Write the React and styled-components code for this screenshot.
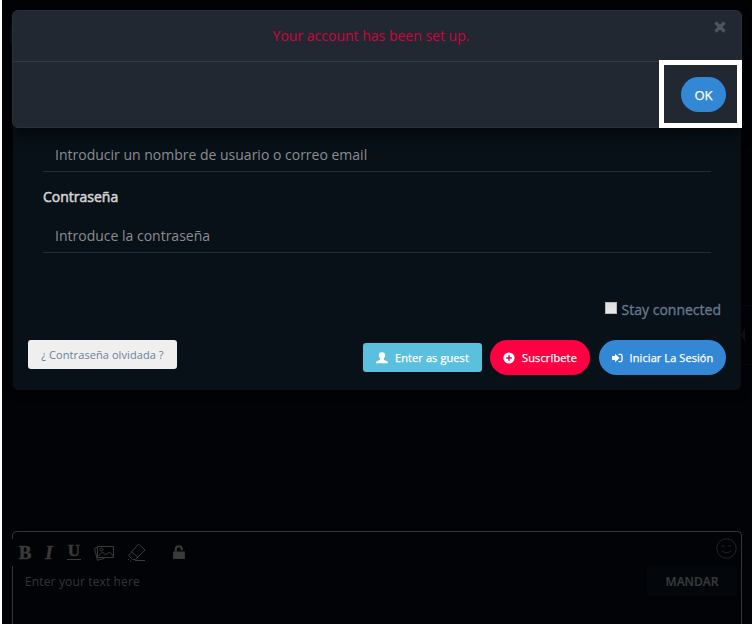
import React from 'react';
import styled, { createGlobalStyle } from 'styled-components';

const GlobalStyle = createGlobalStyle`
  *, *::before, *::after { box-sizing: border-box; }
  body {
    margin: 0;
    background: #fff;
    font-family: "Open Sans", "Noto Sans", sans-serif;
    font-size: 14px;
    overflow: hidden;
  }
  button, input { font-family: inherit; }
`;

const Screen = styled.div`
  position: relative;
  width: 750px;
  height: 624px;
  margin-left: 2px;
  padding: 0 10px;
  background: #020307;
  display: flex;
  flex-direction: column;
  justify-content: flex-end;
  overflow: hidden;
`;

/* Chat page behind the dialogs */
const Editor = styled.section`
  height: 93px;
  border: 1px solid #353535;
  border-bottom: 0;
  border-radius: 5px 5px 0 0;
`;

const Toolbar = styled.div`
  display: flex;
  align-items: center;
  height: 27px;
  margin: 7px 0 0 -1px;
  padding: 0 4px 0 6px;
  background: #020307;
  color: #3a3a3a;
`;

const Format = styled.span`
  width: 14px;
  display: flex;
  justify-content: center;
  font: bold 19px/27px "Liberation Serif", serif;
  font-style: ${(p) => (p.$italic ? 'italic' : 'normal')};
  -webkit-text-stroke: 0.5px currentColor;
  margin-right: 10px;
`;

const Underlined = styled.span`
  width: 14px;
  height: 16px;
  margin: -1px 13px 0 1px;
  border-bottom: 1px solid #3a3a3a;
  font: bold 17px/14px "Liberation Serif", serif;
  -webkit-text-stroke: 0.4px currentColor;
  display: flex;
  justify-content: center;
`;

const ToolIcon = styled.svg`
  width: ${(p) => p.$w}px;
  height: ${(p) => p.$h}px;
  margin-right: ${(p) => p.$gap || 0}px;
  fill: none;
  stroke: #3a3a3a;
  stroke-width: 1;
  flex: none;
`;

const Smiley = styled(ToolIcon)`
  margin: -9px 0 0 auto;
  stroke: #242424;
`;

const Compose = styled.div`
  display: flex;
  justify-content: space-between;
  padding: 0 4px 0 12px;
`;

const ComposeText = styled.span`
  color: #343434;
  font-size: 12px;
  line-height: 32px;
  letter-spacing: 0.14px;
`;

const Send = styled.button`
  width: 90px;
  height: 30px;
  padding: 0;
  border: 0;
  border-radius: 2px;
  background: #03070b;
  color: #3a3a3a;
  font-size: 12px;
  font-weight: 600;
  -webkit-text-stroke: 0.2px currentColor;
`;

const PageTab = styled.span`
  position: absolute;
  left: 8px;
  top: 24px;
  width: 12px;
  height: 23px;
  border-radius: 4px;
  background: #02161b;
`;

const PageEdge = styled.span`
  position: absolute;
  left: 736px;
  top: 305px;
  width: 14px;
  height: 60px;
  padding-right: 7px;
  border: solid #07080b;
  border-width: 1px 0;
  display: flex;
  align-items: center;
  justify-content: flex-end;
`;

/* Dialogs */
const Login = styled.section`
  position: absolute;
  left: 11px;
  top: 14px;
  width: 728px;
  height: 376px;
  padding: 126px 15px 0;
  border-radius: 5px;
  background: #081018;
  box-shadow: 0 3px 8px #0009;
`;

const Fields = styled.div`
  display: flex;
  flex-direction: column;
  padding: 0 15px;
`;

const Field = styled.div`
  height: 32px;
  padding-left: 12px;
  border-bottom: 1px solid #1d2f3d;
  color: #8b8d90;
  line-height: 29px;
`;

const Label = styled.label`
  height: 49px;
  color: #d3d3d3;
  font-weight: 400;
  -webkit-text-stroke: 0.55px currentColor;
  line-height: 50px;
`;

const Remember = styled.label`
  display: flex;
  justify-content: flex-end;
  align-items: center;
  height: 20px;
  margin-top: 47px;
  padding-right: 5px;
  gap: 5px;
  color: #66788e;
  -webkit-text-stroke: 0.35px currentColor;
  line-height: 20px;
`;

const Check = styled.span`
  width: 12px;
  height: 12px;
  margin-top: -4px;
  border: 1px solid #b7b7b7;
  background: linear-gradient(#dedede, #e8e8e8);
`;

const Actions = styled.div`
  display: flex;
  align-items: center;
  height: 35px;
  margin-top: 20px;
`;

const Button = styled.button`
  display: flex;
  align-items: center;
  justify-content: center;
  flex: none;
  width: ${(p) => p.$w}px;
  height: ${(p) => (p.$pill ? 35 : 29)}px;
  margin-left: ${(p) => p.$gap || 0}px;
  padding: 0;
  gap: 7px;
  border: 0;
  border-radius: ${(p) => (p.$pill ? 18 : 3)}px;
  background: ${(p) => p.$bg};
  color: #fff;
  font-size: ${(p) => p.$size || 11}px;
  font-weight: 400;
  letter-spacing: ${(p) => p.$track || 0}px;
  -webkit-text-stroke: 0.25px currentColor;
  white-space: nowrap;
`;

const Forgot = styled(Button)`
  margin: -6px auto 0 0;
  color: #6b7f98;
  -webkit-text-stroke: 0;
`;

const ButtonIcon = styled.svg`
  width: ${(p) => p.$w}px;
  height: ${(p) => p.$h}px;
  fill: #fff;
  flex: none;
`;

const Alert = styled.section`
  position: absolute;
  left: 10px;
  top: 10px;
  width: 730px;
  height: 118px;
  border: 1px solid #263139;
  border-radius: 6px;
  background: #212832;
  box-shadow: 0 5px 15px #0009;
`;

const AlertBody = styled.div`
  position: relative;
  height: 51px;
  padding-right: 12px;
  border-bottom: 1px solid #2d3b43;
  color: #d0033b;
  line-height: 50px;
  text-align: center;
`;

const Close = styled.svg`
  position: absolute;
  right: 15px;
  top: 10px;
  width: 12px;
  height: 12px;
  stroke: #4d5560;
  stroke-width: 3.2;
`;

const AlertFooter = styled.div`
  display: flex;
  justify-content: flex-end;
  padding: 15px 15px 0;
`;

const Highlight = styled.div`
  position: absolute;
  left: 657px;
  top: 60px;
  width: 83px;
  height: 68px;
  border: 5px solid #fff;
`;

export default function App() {
  return (
    <>
      <GlobalStyle />
      <Screen>
        <PageTab />
        <PageEdge>
          <svg width="4" height="14" fill="#121417"><path d="M4 0v14L0 7z" /></svg>
        </PageEdge>

        <Editor>
          <Toolbar>
            <Format>B</Format>
            <Format $italic>I</Format>
            <Underlined>U</Underlined>
            <ToolIcon $w={20} $h={16} $gap={13} viewBox="0 0 20 16">
              <path d="M3.500 1.500h16v11h-16zM3.500 2.500l-3 .8 3 12 7-2M4.500 11l4-4 3 3 4-3 4 4" />
              <circle cx="7.500" cy="4.500" r="1.500" />
            </ToolIcon>
            <ToolIcon $w={19} $h={19} $gap={27} viewBox="0 0 19 19">
              <path d="M11.500 1 18 7 8.500 16.500H5.500L1.500 12.500zM4.500 8.500 11 14.500M8 17.500h10M1 16l1 1M3 18h1" />
            </ToolIcon>
            <ToolIcon $w={12} $h={15} viewBox="0 0 11 14">
              <path d="M.5 6.500h10v6H.5z" fill="#3a3a3a" />
              <path d="M2.500 6V4a2.800 2.800 0 0 1 5.600 0v1" strokeWidth="2" />
            </ToolIcon>
            <Smiley $w={21} $h={21} viewBox="0 0 21 21">
              <circle cx="10.500" cy="10.500" r="9.700" />
              <path d="M5.500 8.500q1.500-2 3 0M12 8.500q1.500-2 3 0M6 13q4.500 3.500 9 0" />
            </Smiley>
          </Toolbar>
          <Compose>
            <ComposeText>Enter your text here</ComposeText>
            <Send>MANDAR</Send>
          </Compose>
        </Editor>

        <Login>
          <Fields>
            <Field>Introducir un nombre de usuario o correo email</Field>
            <Label>Contraseña</Label>
            <Field>Introduce la contraseña</Field>
          </Fields>
          <Remember>
            <Check />
            Stay connected
          </Remember>
          <Actions>
            <Forgot $w={149} $track={0.08} $bg="#efefef">¿ Contraseña olvidada ?</Forgot>
            <Button $w={119} $track={0.1} $bg="#5bc0de">
              <ButtonIcon $w={12} $h={12} viewBox="0 0 12 12">
                <path d="M6 .3c-2.400 0-3.300 1.300-3.100 3.100.1 1.600.8 2.500 1.300 3v1.200c0 1-4.200 1-4.200 3.600h12c0-2.600-4.200-2.600-4.200-3.600V6.400c.5-.5 1.200-1.400 1.300-3C9.300 1.600 8.400.3 6 .3z" />
              </ButtonIcon>
              Enter as guest
            </Button>
            <Button $w={100} $track={0.14} $pill $gap={8} $bg="#ff0043">
              <ButtonIcon $w={12} $h={12} viewBox="0 0 12 12">
                <circle cx="6" cy="6" r="5.600" />
                <path d="M6 3.200v5.600M3.200 6h5.600" stroke="#ff0043" strokeWidth="1.500" />
              </ButtonIcon>
              Suscríbete
            </Button>
            <Button $w={127} $track={0.08} $pill $gap={9} $bg="#3388d6">
              <ButtonIcon $w={11} $h={10} viewBox="0 0 11 10">
                <path d="M0 3h3V.7L7.500 5 3 9.300V7H0zM6.500.8h2A2.200 2.200 0 0 1 10.700 3v4a2.200 2.200 0 0 1-2.200 2.200h-2V7.900h2a.9.9 0 0 0 .9-.9V3a.9.9 0 0 0-.9-.9h-2z" />
              </ButtonIcon>
              Iniciar La Sesión
            </Button>
          </Actions>
        </Login>

        <Alert>
          <AlertBody>
            Your account has been set up.
            <Close viewBox="0 0 12 12"><path d="m1.500 1.500 9 9M10.500 1.500l-9 9" /></Close>
          </AlertBody>
          <AlertFooter>
            <Button $w={45} $pill $size={13} $bg="#3388d6">OK</Button>
          </AlertFooter>
        </Alert>
        <Highlight />
      </Screen>
    </>
  );
}
